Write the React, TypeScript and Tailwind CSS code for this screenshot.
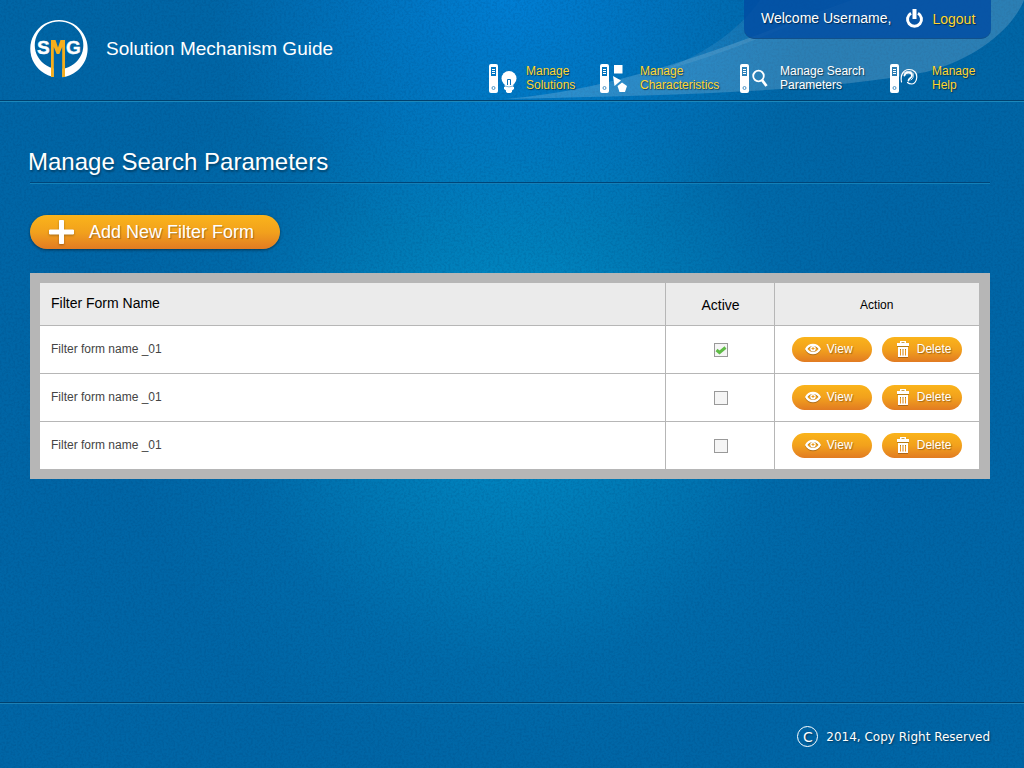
import React from "react";

const forms = [
  { id: 1, name: "Filter form name _01", active: true },
  { id: 2, name: "Filter form name _01", active: false },
  { id: 3, name: "Filter form name _01", active: false },
];

function Backdrop() {
  return (
    <svg className="pointer-events-none absolute inset-0 h-full w-full" aria-hidden="true">
      <filter id="grain" x="0" y="0" width="100%" height="100%" colorInterpolationFilters="sRGB">
        <feTurbulence type="fractalNoise" baseFrequency="0.45" numOctaves="2" seed="4" />
        <feColorMatrix values="0 0 0 0 0.0  0 0 0 0 0.2  0 0 0 0 0.4  3 0 0 0 -1.2" />
      </filter>
      <rect width="100%" height="100%" filter="url(#grain)" opacity="0.13" />
    </svg>
  );
}

function Swoosh() {
  return (
    <svg className="pointer-events-none absolute right-0 top-0 h-[100px] w-[524px]" viewBox="0 0 524 100" aria-hidden="true">
      <path d="M150 74C200 58 238 32 260 0H352C290 24 230 54 150 74Z" fill="#fff" fillOpacity="0.08" />
      <path d="M5 99C130 88 230 44 352 0H524C514 26 480 58 426 72C320 92 180 95 5 99Z" fill="#fff" fillOpacity="0.17" />
    </svg>
  );
}

function Logo() {
  return (
    <svg className="h-[58px] w-[58px]" viewBox="0 0 58 58" aria-hidden="true">
      <path fillRule="evenodd" fill="#fff" d="M29 0A28.700 28.700 0 1 1 28.900 0ZM29 1.400A24.300 23.800 0 1 0 29.100 1.400Z" />
      <path d="M23.500 30V58H32.500V30Z" fill="#0066a9" />
      <g fontFamily="Liberation Sans, sans-serif" fontWeight="700" fontSize="19" fill="#fff" stroke="#fff" strokeWidth="0.400">
        <text x="7" y="33.500">S</text>
        <text x="36" y="33.500">G</text>
      </g>
      <path d="M21 20H25.500L28 27.500L30.500 20H35V57H32.200V27L29.300 34H26.700L23.800 27V57H21Z" fill="#f5ae1c" />
    </svg>
  );
}

function Tower() {
  return (
    <>
      <path fillRule="evenodd" fill="#fff" d="M2 0H7Q9 0 9 2V27Q9 29 7 29H2Q0 29 0 27V2Q0 0 2 0ZM2 3V12H7V3Z" />
      <path d="M3 5.500H6M3 7.500H6M3 9.500H6" stroke="#fff" strokeWidth="1" />
      <circle cx="4.500" cy="24" r="1.500" fill="none" stroke="#4a94c6" strokeWidth="1" />
    </>
  );
}

const glyphs: Record<string, React.ReactNode> = {
  solutions: (
    <>
      <circle cx="20" cy="14.500" r="7.500" fill="#fff" />
      <path d="M15.500 19H24.500L24 24H16Z" fill="#fff" />
      <path d="M18.500 21V15.500H21.500V21" stroke="#0871b9" strokeWidth="1" fill="none" />
      <path d="M15 23H25V25L23 26.500V28L21.500 29H18.500L17 28V26.500L15 25Z" fill="#fff" />
      <path d="M15 21.800Q20 24 25 21.800" stroke="#5aa2d0" strokeWidth="0.800" fill="none" />
    </>
  ),
  characteristics: (
    <g fill="#fff">
      <path d="M14 1H22.500V9.500H14ZM13 12L21 16.500L14.500 22ZM22 18.500L27 22L25 28H19.500L17.500 22Z" />
    </g>
  ),
  search: (
    <g fill="none" stroke="#fff">
      <circle cx="18.500" cy="12" r="5.300" strokeWidth="1.800" />
      <path d="M22 16L26.500 22" strokeWidth="2.800" />
    </g>
  ),
  help: (
    <g fill="none" stroke="#fff" strokeLinecap="round">
      <path d="M11.500 18C10 11 13.500 5.500 19 5.500C24 5.500 27 9 26.800 13C26.600 17 24.500 20 22 20C20 20 18.500 19.500 17.500 18.500" strokeWidth="1.200" />
      <path d="M14.500 11.500C15 7.500 22 7.500 22 11.500C22 14 18.500 14.500 18.500 16.500" strokeWidth="1.800" />
      <path d="M14 9C16 7 21 6.500 23 9.500C24 12 23 15 21 16" strokeWidth="0.800" />
    </g>
  ),
};

function NavItem({ icon, a, b, active, className }: { icon: string; a: string; b: string; active?: boolean; className: string }) {
  return (
    <a href="#" className={`flex items-center text-xs leading-[14px] ${active ? "text-white" : "text-[#ffd52e]"} ${className}`}>
      <svg className="h-[30px] w-[30px] shrink-0" viewBox="0 -1 30 30" aria-hidden="true">
        <Tower />
        {glyphs[icon]}
      </svg>
      <span className="[text-shadow:1px_1px_1px_rgba(0,0,0,0.5)]">
        {a}
        <br />
        {b}
      </span>
    </a>
  );
}

function EyeIcon() {
  return (
    <svg className="h-3 w-4 drop-shadow-[0_1px_0_rgba(0,0,0,0.25)]" viewBox="0 0 16 12" aria-hidden="true">
      <path fillRule="evenodd" fill="#fff" d="M0 6C3 -1 13 -1 16 6C13 13 3 13 0 6ZM2.500 6C5 10 11 10 13.500 6C11 2 5 2 2.500 6Z" />
      <circle cx="8" cy="5.800" r="2.800" fill="#fff" />
      <path d="M8 4V7M6.500 5.500H9.500" stroke="#ef9a1b" />
    </svg>
  );
}

function TrashIcon() {
  return (
    <svg className="h-4 w-3 drop-shadow-[0_1px_0_rgba(0,0,0,0.25)]" viewBox="0 0 12 16" aria-hidden="true">
      <path fillRule="evenodd" fill="#fff" d="M3 0H9V2H12V5H0V2H3ZM4.500 1.200V2H7.500V1.200ZM1 6H11V16H1ZM3 8V14.500H4V8ZM5.500 8V14.500H6.500V8ZM8 8V14.500H9V8Z" />
    </svg>
  );
}

const pill =
  "flex cursor-pointer items-center rounded-full bg-linear-to-b from-[#fab41b] via-[#f2a11c] to-[#e17b22] text-white [text-shadow:1px_1px_1px_rgba(0,0,0,0.3)]";

export default function App() {
  return (
    <div className="relative flex min-h-screen flex-col bg-[#0066a6] bg-[radial-gradient(ellipse_300px_250px_at_50%_0,rgba(0,132,222,0.8)_0%,rgba(0,132,220,0.4)_50%,rgba(0,133,220,0)_100%),radial-gradient(ellipse_390px_420px_at_50%_48%,#008fca_0%,rgba(0,140,195,0.55)_40%,rgba(0,125,185,0.2)_72%,rgba(0,102,166,0)_100%)] font-['Liberation_Sans',Arial,sans-serif]">
      <Backdrop />
      <header className="relative flex h-[101px] justify-between border-b border-[#00416f] pl-[30px] pr-[33px] shadow-[0_1px_0_#1c88bb]">
        <Swoosh />
        <a href="#" className="relative flex items-center gap-[18px] pb-[2px] text-[19px] text-white">
          <Logo />
          <span>Solution Mechanism Guide</span>
        </a>
        <div className="relative flex flex-col items-end">
          <div className="flex h-[39px] w-[247px] items-center rounded-b-[10px] border-b border-[#11508a] bg-[#004ba3]/80 pl-[17px] text-sm text-white">
            <span className="pb-[2px] [text-shadow:1px_1px_1px_rgba(0,0,0,0.5)]">Welcome Username,</span>
            <a href="#" className="ml-[14px] flex items-center gap-2 text-[#ffd52e]">
              <svg className="h-5 w-[19px]" viewBox="0 0 19 20" fill="none" stroke="#fff" strokeWidth="3" aria-hidden="true">
                <path d="M6 4.200A7 7 0 1 0 13 4.200" />
                <path d="M9.500 0V10" strokeWidth="4" />
              </svg>
              <span className="[text-shadow:1px_1px_1px_rgba(0,0,0,0.5)]">Logout</span>
            </a>
          </div>
          <nav className="mt-6 flex">
            <NavItem className="w-[111px] gap-[7px]" icon="solutions" a="Manage" b="Solutions" />
            <NavItem className="w-[140px] gap-[10px]" icon="characteristics" a="Manage" b="Characteristics" />
            <NavItem className="w-[150px] gap-[10px]" icon="search" a="Manage Search" b="Parameters" active />
            <NavItem className="w-[101px] gap-3" icon="help" a="Manage" b="Help" />
          </nav>
        </div>
      </header>

      <main className="relative grow pb-8 pl-[30px] pr-[34px] pt-[45px]">
        <div className="border-b border-[#00467a] pb-1 shadow-[0_1px_0_#1380b8]">
          <h1 className="-ml-[2px] text-2xl text-white [text-shadow:1px_2px_2px_rgba(0,0,0,0.35)]">Manage Search Parameters</h1>
        </div>
        <button type="button" className={`${pill} mt-8 h-[34px] w-[250px] gap-[14px] pl-[19px] text-lg shadow-[0_1px_3px_rgba(0,0,0,0.5)]`}>
          <svg className="h-[26px] w-[26px] drop-shadow-[0_1px_1px_rgba(0,0,0,0.3)]" viewBox="0 0 26 26" aria-hidden="true">
            <path d="M10.500 1.500H14.500V11H24.500V15H14.500V24.500H10.500V15H0.500V11H10.500Z" fill="#fff" stroke="#fff" strokeLinejoin="round" />
          </svg>
          Add New Filter Form
        </button>

        <div className="mt-6 bg-[#b6b6b6] py-[10px] pl-[10px] pr-[11px]">
          <table className="w-full border-collapse bg-white">
            <thead>
              <tr className="h-[42px] border-b border-[#b6b6b6] bg-[#ebebeb] text-black">
                <th className="pb-[2px] pl-[11px] text-left text-sm font-normal">Filter Form Name</th>
                <th className="w-[109px] border-x border-[#b6b6b6] pl-[2px] pt-[2px] text-sm font-normal">Active</th>
                <th className="w-[205px] pt-[2px] text-xs font-normal">Action</th>
              </tr>
            </thead>
            <tbody>
              {forms.map((f) => (
                <tr key={f.id} className="h-12 border-b border-[#b6b6b6] last:border-b-0">
                  <td className="pl-[11px] text-xs text-[#444]">{f.name}</td>
                  <td className="border-x border-[#b6b6b6] pl-[2px] pt-[2px]">
                    <label className="relative mx-auto block h-[14px] w-[14px]">
                      <input
                        type="checkbox"
                        defaultChecked={f.active}
                        aria-label={`Active: ${f.name}`}
                        className="peer block h-[14px] w-[14px] appearance-none border border-[#999] bg-[#f5f5f5]"
                      />
                      <svg className="pointer-events-none absolute inset-0 hidden h-[14px] w-[14px] peer-checked:block" viewBox="0 0 14 14" aria-hidden="true">
                        <path d="M2.500 7L5.500 9.500L11.500 4.500" fill="none" stroke="#5fbb46" strokeWidth="3" />
                      </svg>
                    </label>
                  </td>
                  <td>
                    <div className="flex justify-center gap-[10px]">
                      <button type="button" className={`${pill} h-[25px] w-20 gap-[6px] pl-[13px] text-xs`}>
                        <EyeIcon />
                        View
                      </button>
                      <button type="button" className={`${pill} h-[25px] w-20 gap-2 pl-[15px] text-xs`}>
                        <TrashIcon />
                        Delete
                      </button>
                    </div>
                  </td>
                </tr>
              ))}
            </tbody>
          </table>
        </div>
      </main>

      <footer className="relative flex h-[66px] items-center justify-end gap-2 border-t border-[#00416f] pr-[34px] pt-[2px] font-['DejaVu_Sans',Verdana,sans-serif] text-xs text-white shadow-[inset_0_1px_0_#1c80b5] [text-shadow:1px_1px_2px_rgba(0,0,0,0.5)]">
        <span className="flex h-[21px] w-[21px] items-center justify-center rounded-full border border-white text-sm">C</span>
        <span>2014, Copy Right Reserved</span>
      </footer>
    </div>
  );
}
